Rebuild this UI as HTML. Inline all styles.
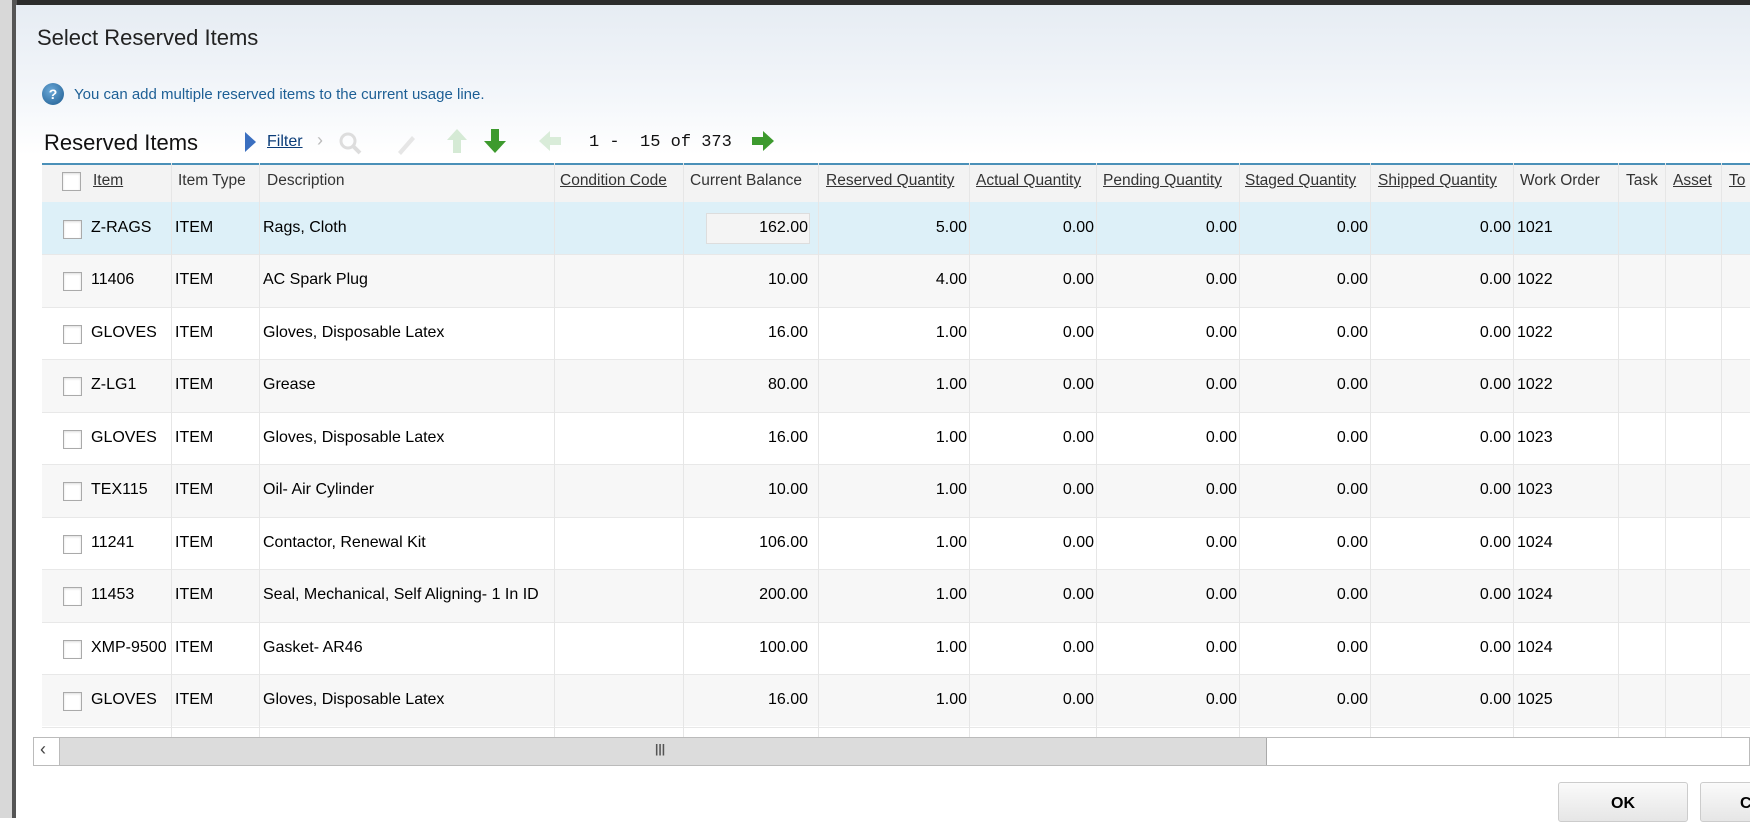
<!DOCTYPE html>
<html><head><style>
*{margin:0;padding:0;box-sizing:border-box}
body{width:1750px;height:818px;overflow:hidden;background:#fff;font-family:"Liberation Sans",Arial,sans-serif;position:relative}
.abs{position:absolute}
.dlg{left:16px;top:5px;width:1734px;height:813px;background:linear-gradient(#e6ecf3 0,#f3f6fa 90px,#fff 150px)}
.t{position:absolute;font-size:16px;color:#000;white-space:nowrap}
.h{position:absolute;font-size:15.5px;color:#333;white-space:nowrap;top:172px}
.u{text-decoration:underline}
.cb{position:absolute;width:19px;height:19px;border:1px solid #aaa;background:#fff;box-shadow:inset 0 1px 2px #ddd}
.vl{position:absolute;top:163px;width:1px;height:574px;background:#e6e6e6}
.r{text-align:right}
</style></head><body>
<div class="abs" style="left:0;top:0;width:1750px;height:6px;background:#2c2c2c"></div>
<div class="abs" style="left:0;top:0;width:14px;height:818px;background:#d8d8d8"></div>
<div class="abs" style="left:12px;top:0;width:5px;height:818px;background:#555"></div>
<div class="abs dlg"></div>
<div class="t" style="left:37px;top:25px;font-size:22px;color:#222">Select Reserved Items</div>
<div class="abs" style="left:42px;top:83px;width:22px;height:22px;border-radius:50%;background:radial-gradient(circle at 40% 35%,#6aa8d8,#1d5b8f);color:#fff;font:bold 14px 'Liberation Sans';text-align:center;line-height:22px">?</div>
<div class="t" style="left:74px;top:86px;font-size:15px;color:#1d5f95">You can add multiple reserved items to the current usage line.</div>
<div class="t" style="left:44px;top:130px;font-size:22px;color:#111">Reserved Items</div>
<svg class="abs" style="left:243px;top:131px" width="14" height="22"><path d="M2 1 L13 11 L2 21Z" fill="#3a6fc0"/></svg>
<div class="t u" style="left:267px;top:133px;font-size:16px;color:#0a3c78">Filter</div>
<div class="t" style="left:317px;top:130px;font-size:18px;color:#bbb">›</div>
<svg class="abs" style="left:337px;top:130px" width="26" height="26"><circle cx="11" cy="11" r="7" fill="none" stroke="#ddd" stroke-width="3"/><path d="M16 16l7 7" stroke="#ddd" stroke-width="4"/></svg>
<svg class="abs" style="left:393px;top:130px" width="24" height="26"><path d="M5 22l14-16 3 3-14 16z" fill="#e6e6e6"/></svg>
<svg class="abs" style="left:445px;top:127px" width="24" height="28"><path d="M12 2 L22 13 H16 V26 H8 V13 H2Z" fill="#d5ead5"/></svg>
<svg class="abs" style="left:482px;top:127px" width="26" height="28"><path d="M9 2 H17 V14 H24 L13 26 L2 14 H9Z" fill="#3d9a2e"/></svg>
<svg class="abs" style="left:537px;top:129px" width="26" height="24"><path d="M2 12 L13 2 V8 H24 V16 H13 V22Z" fill="#d9ecd9"/></svg>
<div class="t" style="left:589px;top:133px;font:17px 'Liberation Mono',monospace;color:#111">1 -&nbsp;&nbsp;15 of 373</div>
<svg class="abs" style="left:750px;top:129px" width="26" height="24"><path d="M24 12 L13 2 V8 H2 V16 H13 V22Z" fill="#3d9a2e"/></svg>

<div class="abs" style="left:42px;top:163px;width:1708px;height:2px;background:#4a90b8"></div>
<div class="abs" style="left:42px;top:165px;width:1708px;height:37px;background:#f3f3f3"></div>
<div class="abs" style="left:42px;top:202px;width:1708px;height:52px;background:#ddf0f8"></div>
<div id="rows"></div>

<div class="abs" style="left:33px;top:737px;width:1717px;height:29px;border:1px solid #bbb;background:#fff"></div>
<div class="abs" style="left:59px;top:738px;width:1208px;height:27px;background:#dcdcdc;border-right:1px solid #aaa;border-left:1px solid #bbb"></div>
<div class="t" style="left:40px;top:739px;font-size:18px;color:#444">‹</div>
<div class="t" style="left:655px;top:742px;font-size:12px;color:#555;font-weight:bold">|||</div>
<div class="abs" style="left:1558px;top:782px;width:130px;height:40px;border:1px solid #ccc;border-radius:3px;background:linear-gradient(#fafafa,#e6e6e6)"></div>
<div class="t" style="left:1611px;top:795px;font-size:16px;font-weight:bold">OK</div>
<div class="abs" style="left:1700px;top:782px;width:60px;height:40px;border:1px solid #ccc;border-radius:3px;background:linear-gradient(#fafafa,#e6e6e6)"></div>
<div class="t" style="left:1740px;top:795px;font-size:16px;font-weight:bold">C</div>
<script>
var d=[["Z-RAGS","Rags, Cloth","162.00","5.00","1021"],["11406","AC Spark Plug","10.00","4.00","1022"],["GLOVES","Gloves, Disposable Latex","16.00","1.00","1022"],["Z-LG1","Grease","80.00","1.00","1022"],["GLOVES","Gloves, Disposable Latex","16.00","1.00","1023"],["TEX115","Oil- Air Cylinder","10.00","1.00","1023"],["11241","Contactor, Renewal Kit","106.00","1.00","1024"],["11453","Seal, Mechanical, Self Aligning- 1 In ID","200.00","1.00","1024"],["XMP-9500","Gasket- AR46","100.00","1.00","1024"],["GLOVES","Gloves, Disposable Latex","16.00","1.00","1025"]];
var h="",H=52.45;
var cols=[42,171,259,554,683,818,969,1096,1239,1370,1513,1618,1665,1721];
for(var i=0;i<11;i++){var y=202+i*H;
 if(i>0)h+='<div class="abs" style="left:42px;top:'+y+'px;width:1708px;height:'+H+'px;background:'+(i%2?'#f7f7f7':'#fff')+';border-top:1px solid #e8e8e8"></div>';}
for(var c=1;c<cols.length;c++)h+='<div class="vl" style="left:'+cols[c]+'px"></div>';
h+='<div class="abs" style="left:706px;top:213px;width:104px;height:31px;background:#f4f4f4;border:1px solid #ddd"></div>';
h+='<div class="cb" style="left:62px;top:172px"></div><div class="h u" style="left:93px">Item</div><div class="h" style="left:178px">Item Type</div><div class="h" style="left:267px">Description</div><div class="h u" style="left:560px">Condition Code</div><div class="h" style="left:690px">Current Balance</div><div class="h u" style="left:826px">Reserved Quantity</div><div class="h u" style="left:976px">Actual Quantity</div><div class="h u" style="left:1103px">Pending Quantity</div><div class="h u" style="left:1245px">Staged Quantity</div><div class="h u" style="left:1378px">Shipped Quantity</div><div class="h" style="left:1520px">Work Order</div><div class="h" style="left:1626px">Task</div><div class="h u" style="left:1673px">Asset</div><div class="h u" style="left:1729px">To</div>';
for(var i=0;i<10;i++){var y=202+i*H,ty=y+17,r=d[i];
 h+='<div class="cb" style="left:63px;top:'+(y+18)+'px"></div>';
 h+='<div class="t" style="left:91px;top:'+ty+'px">'+r[0]+'</div>';
 h+='<div class="t" style="left:175px;top:'+ty+'px">ITEM</div>';
 h+='<div class="t" style="left:263px;top:'+ty+'px">'+r[1]+'</div>';
 function rt(x,v){return '<div class="t r" style="left:'+(x-150)+'px;width:150px;top:'+ty+'px">'+v+'</div>';}
 h+=rt(808,r[2])+rt(967,r[3])+rt(1094,"0.00")+rt(1237,"0.00")+rt(1368,"0.00")+rt(1511,"0.00");
 h+='<div class="t" style="left:1517px;top:'+ty+'px">'+r[4]+'</div>';}
document.getElementById("rows").outerHTML=h;
</script>
</body></html>
